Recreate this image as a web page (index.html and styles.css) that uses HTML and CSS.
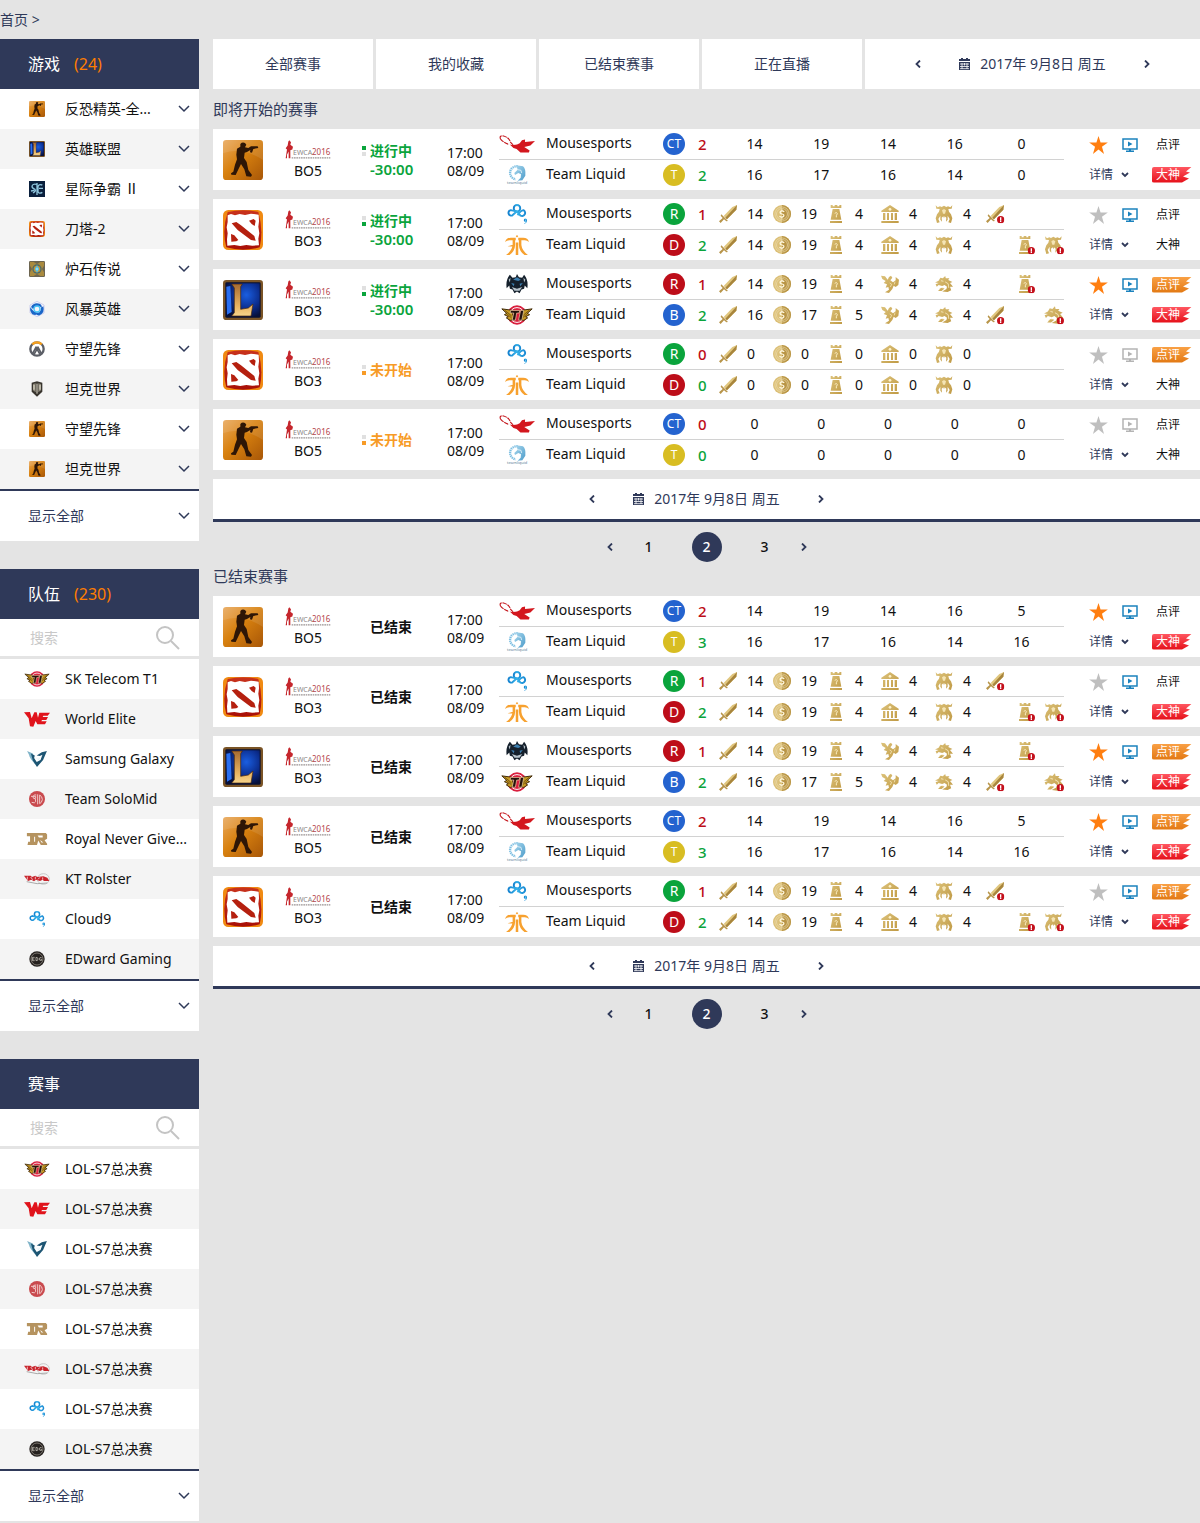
FILE: index.html
```html
<!DOCTYPE html>
<html lang="zh-CN">
<head>
<meta charset="utf-8">
<meta name="viewport" content="width=device-width, initial-scale=1">
<title>赛事</title>
<link rel="stylesheet" href="styles.css">
</head>
<body>
<svg class="sprite" aria-hidden="true">
  <defs>
    <linearGradient id="g-cs" x1="0" y1="0" x2="1" y2="1"><stop offset="0" stop-color="#e9a85c"/><stop offset=".45" stop-color="#d8810f"/><stop offset="1" stop-color="#a85708"/></linearGradient>
    <linearGradient id="g-dota" x1="0" y1="0" x2="0" y2="1"><stop offset="0" stop-color="#c8321c"/><stop offset="1" stop-color="#a80f08"/></linearGradient>
    <radialGradient id="g-lol" cx=".6" cy=".35" r=".7"><stop offset="0" stop-color="#1a5ee0"/><stop offset=".6" stop-color="#0b2c8c"/><stop offset="1" stop-color="#07103a"/></radialGradient>
    <linearGradient id="g-gold" x1="0" y1="0" x2="1" y2="1"><stop offset="0" stop-color="#dcc27a"/><stop offset="1" stop-color="#c09a45"/></linearGradient>
    <linearGradient id="g-bronze" x1="0" y1="0" x2="0" y2="1"><stop offset="0" stop-color="#a66a30"/><stop offset=".7" stop-color="#e9b461"/><stop offset="1" stop-color="#f6d48c"/></linearGradient>
    <linearGradient id="g-c9" x1="0" y1="0" x2="1" y2="0"><stop offset="0" stop-color="#1583d0"/><stop offset=".5" stop-color="#35b3ea"/><stop offset="1" stop-color="#1b8bd4"/></linearGradient>
    <linearGradient id="g-liquid" x1="0" y1="0" x2="1" y2="1"><stop offset="0" stop-color="#a9d8ee"/><stop offset="1" stop-color="#4d9cca"/></linearGradient>
  </defs>
  <symbol id="cs" viewBox="0 0 120 120"><rect width="120" height="120" rx="10" fill="url(#g-cs)"/><path d="M0 40Q60 20 120 60V10Q120 0 110 0H10Q0 0 0 10Z" fill="#fff" opacity=".1"/><path d="M52 12Q58 5 66 9L70 14L66 22L76 24L84 19L104 19L106 24L91 27L87 38L81 37L82 30L72 36L65 38L63 54L71 66L76 90L87 105L84 110L70 109L64 88L54 72L47 86L38 105L25 104L24 100L31 95L36 74L42 58L40 44L42 26L52 20Z" fill="#2e1606"/></symbol>
  <symbol id="dota" viewBox="0 0 120 120"><rect width="120" height="120" rx="16" fill="#f08a12"/><path d="M14 6Q60 -4 106 6Q122 60 110 112Q60 126 10 112Q-4 60 14 6Z" fill="url(#g-dota)"/><path d="M14 16L24 12L36 16L50 12L66 15L84 11L107 14L108 34L106 50L109 70L106 86L108 106L88 107L70 105L52 108L34 105L13 107L12 88L14 70L11 52L14 36Z" fill="#fff"/><path d="M26 40L40 36L54 46L94 78L98 92L84 90L44 60ZM78 32L92 27L98 32L95 48L86 42ZM24 72L34 76L46 90L40 94L25 95Z" fill="#b5200f"/></symbol>
  <symbol id="lol" viewBox="0 0 120 120"><rect width="120" height="120" rx="10" fill="#7a5426"/><rect x="7" y="7" width="106" height="106" rx="4" fill="#0a1030"/><rect x="10" y="10" width="100" height="100" fill="url(#g-lol)"/><path d="M10 20L22 18L26 96L12 104Z" fill="#2a6ff0"/><path d="M26 12H58L53 20V88L76 84L90 72L84 108H26L34 98V24Z" fill="url(#g-bronze)" stroke="#4a2508" stroke-width="2"/></symbol>
  <symbol id="sc" viewBox="0 0 48 48"><rect width="48" height="48" fill="#0a1f3c"/><path d="M22 10Q10 8 9 16Q9 22 18 25Q22 30 12 36M40 12Q28 8 27 18V32Q30 40 40 34M24 6V42M30 22H42M6 30L16 28" fill="none" stroke="#8ec4dc" stroke-width="4"/></symbol>
  <symbol id="hs" viewBox="0 0 48 48"><rect width="48" height="48" rx="4" fill="#6d6550"/><path d="M3 3H14L24 9L34 3H45V14L39 24L45 34V45H34L24 39L14 45H3V34L9 24L3 14Z" fill="#a98a3e"/><circle cx="24" cy="24" r="14" fill="#4d6a6a"/><circle cx="24" cy="24" r="10" fill="#c3953a"/><path d="M24 12L29 24L24 36L19 24Z" fill="#52c6ec"/><circle cx="24" cy="24" r="6" fill="#52c6ec"/><circle cx="24" cy="24" r="2" fill="#fff"/></symbol>
  <symbol id="hots" viewBox="0 0 48 48"><path d="M24 1L45 12V36L24 47L3 36V12Z" fill="#f3f4fc" stroke="#b8bce8" stroke-width="2"/><path d="M6 18Q14 3 32 8Q40 12 38 20Q24 8 12 24ZM43 16Q48 36 32 43Q24 44 20 38Q36 36 36 20ZM10 40Q0 28 5 19Q12 36 30 34Q24 46 10 40Z" fill="#1a66c8"/><circle cx="24" cy="24" r="9" fill="none" stroke="#4bc4f4" stroke-width="4"/></symbol>
  <symbol id="ow" viewBox="0 0 48 48"><circle cx="24" cy="24" r="20" fill="none" stroke="#5b5e66" stroke-width="7"/><path d="M10 10A20 20 0 0 1 38 10" fill="none" stroke="#f6a01e" stroke-width="7"/><path d="M11 37L22 17V28L15 40M37 37L26 17V28L33 40" fill="none" stroke="#5b5e66" stroke-width="5"/></symbol>
  <symbol id="wot" viewBox="0 0 48 48"><path d="M8 5L24 1L40 5V32L24 47L8 32Z" fill="#38342e"/><path d="M12 9L20 7V34L12 28ZM36 9L28 7V34L36 28Z" fill="#8f8a7c"/><path d="M24 8V38M15 12V26M33 12V26" stroke="#e4dfcf" stroke-width="3"/></symbol>
  <symbol id="skt" viewBox="0 0 94 62"><circle cx="47" cy="31" r="30" fill="#d91f3e"/><circle cx="47" cy="31" r="23" fill="none" stroke="#fff" stroke-width="3"/><path d="M0 12L30 16L38 44L26 48L14 40L20 36L8 30L15 26ZM94 12L64 16L56 44L68 48L80 40L74 36L86 30L79 26Z" fill="#c99a22" stroke="#3b2608" stroke-width="3"/><path d="M9 16L30 34M13 25L30 40M85 16L64 34M81 25L64 40" stroke="#4b360e" stroke-width="2"/><path d="M27 17H56L53 25H46L42 47H32L37 25H26ZM58 17H68L62 47H52Z" fill="#24110c" stroke="#f4dfae" stroke-width="2"/></symbol>
  <symbol id="we" viewBox="0 0 78 48"><path d="M0 4L18 3L23 22L31 4L38 4L42 20L46 5H78L71 14H58L56 18H72L67 27H54L52 31H68L63 40H40L35 30L28 47L18 46L14 22Z" fill="#e0131b"/></symbol>
  <symbol id="sg" viewBox="0 0 62 50"><path d="M0 0L18 8L22 24L30 36L26 42Q8 24 6 12Z" fill="#7fb3c8"/><path d="M62 0L46 4L30 14L40 16L48 12L42 28L30 34L22 22L24 14L12 8L18 30L31 50L50 28Z" fill="#1d5573"/><path d="M26 20L34 24L42 20L36 30Z" fill="#e9f4f8"/></symbol>
  <symbol id="tsm" viewBox="0 0 48 48"><circle cx="24" cy="24" r="24" fill="#c94a4e"/><path d="M6 16H20V22H14M22 12Q12 10 12 20Q22 22 20 32Q18 38 8 34M26 40V10M32 38V12Q40 16 40 26Q38 36 32 38" fill="none" stroke="#f2c9c8" stroke-width="3"/></symbol>
  <symbol id="rng" viewBox="0 0 64 38"><path d="M0 0H60L64 5V18L56 23L64 34V38H44L36 24L32 38H2L4 28H10V10H0Z" fill="#b5935f"/><path d="M34 8H50V14H38ZM23 12V28H26V12ZM42 22L52 30H46Z" fill="#fff"/></symbol>
  <symbol id="kt" viewBox="0 0 78 36"><ellipse cx="58" cy="18" rx="18" ry="16" fill="none" stroke="#c9c9c9" stroke-width="3"/><path d="M8 26Q40 36 70 30" fill="none" stroke="#aaa" stroke-width="3"/><path d="M0 8H20L24 12L34 8L40 12L58 10L70 14L76 24H60L56 20L48 24L36 20L30 25L22 20L12 24Z" fill="#c8242c"/><path d="M10 11V20M20 12L26 20M34 11V19M42 19L48 13M56 13V20" stroke="#fff" stroke-width="2"/></symbol>
  <symbol id="c9" viewBox="0 0 64 62"><g fill="none" stroke="url(#g-c9)" stroke-width="6"><circle cx="32" cy="13" r="10"/><path d="M26 22L13 19A8.500 8.500 0 1 0 18 35L31 23L43 36A8.500 8.500 0 1 0 52 19Q43 20 34 35"/><circle cx="58" cy="50" r="3" stroke-width="4"/><path d="M61 51Q61 58 56 61" stroke-width="3"/></g></symbol>
  <symbol id="edg" viewBox="0 0 48 48"><circle cx="24" cy="24" r="23" fill="#25211f"/><circle cx="24" cy="24" r="18" fill="none" stroke="#a59e96" stroke-width="2"/><path d="M10 19H17M10 24H16M10 29H17M10 19V29M21 19V29Q28 29 27 24Q27 19 21 19M38 20Q31 18 31 24Q31 30 38 28V25H35" fill="none" stroke="#d9d4cc" stroke-width="2"/></symbol>
  <symbol id="mouz" viewBox="0 0 94 46"><path d="M4 10Q0 0 12 2Q26 6 30 18Q36 26 46 30M4 10Q12 20 26 24" fill="none" stroke="#c4161c" stroke-width="3" stroke-dasharray="11 2"/><path d="M28 24Q44 28 54 21L60 13L68 11L68 18L94 15L82 27L66 31L80 40L78 45H56L46 36Q36 34 28 24Z" fill="#d3171e"/></symbol>
  <symbol id="liquid" viewBox="0 0 60 60"><path d="M32 4A19 19 0 1 0 26 43" fill="none" stroke="#7dbfe2" stroke-width="7" stroke-dasharray="4 2"/><path d="M28 1L48 4Q57 12 55 32L46 46L32 47L41 38L42 28L34 24L24 30L22 24L32 14Z" fill="url(#g-liquid)"/><path d="M32 14L42 16L44 24" fill="none" stroke="#fff" stroke-width="2"/></symbol>
  <symbol id="fnatic" viewBox="0 0 76 64"><path d="M0 22Q3 9 18 9H34V17H16Q6 16 0 22ZM76 22Q73 9 58 9H42V17H60Q70 16 76 22ZM24 17H32V32Q31 52 14 64H3Q22 50 24 32ZM52 17H44V32Q45 52 62 64H73Q54 50 52 32ZM34 24H42V64H34ZM38 0L42 4L38 8L34 4ZM8 36L24 31V37L16 37Z" fill="#f7a12f"/></symbol>
  <symbol id="dragonteam" viewBox="0 0 68 62"><path d="M12 2L20 12L30 10L34 0L40 10L50 12L56 2Q70 18 66 44L58 36L56 46L48 48L42 60L34 54L26 60L20 48L12 46L10 36L2 44Q-2 18 12 2Z" fill="#15202c"/><path d="M22 18L34 10L46 18L38 22ZM16 28L26 30L24 38ZM52 28L42 30L44 38Z" fill="#3c7fb0"/><path d="M18 40L34 46L50 40L42 52H26ZM8 18L14 12L12 26ZM60 18L54 12L56 26Z" fill="#b7c3cb"/></symbol>
  <symbol id="event" viewBox="0 0 138 56"><path d="M10 4L13 0L18 6L16 14L24 20L22 28L16 30V54H11V34L6 44V54H2L6 28L2 24L8 16Z" fill="#c5262c"/><path d="M20 53H136" stroke="#9b9494" stroke-width="4" stroke-dasharray="5 2"/></symbol>
  <symbol id="sword" viewBox="0 0 54 54"><path d="M54 0L52 14L24 43L14 33L40 6Z" fill="#e0c67e"/><path d="M54 0L52 14L24 43L19 38Z" fill="#a8853d"/><path d="M7 28L27 48L22 49L15 43L5 54L0 49L11 39L5 32Z" fill="#b8954a"/></symbol>
  <symbol id="coin" viewBox="0 0 56 56"><circle cx="28" cy="28" r="28" fill="#dcc078"/><path d="M28 0A28 28 0 0 1 28 56Z" fill="#b99546"/><circle cx="28" cy="28" r="22" fill="none" stroke="#f0dfaf" stroke-width="2"/><circle cx="28" cy="28" r="17" fill="none" stroke="#efe0b4" stroke-width="2"/><path d="M35 21Q28 16 23 20Q20 26 28 28Q36 30 33 35Q28 40 20 35M28 14V18M28 38V42" fill="none" stroke="#fff8e0" stroke-width="4"/></symbol>
  <symbol id="tower" viewBox="0 0 54 54"><path d="M11 0H17V4H23V0H31V4H37V0H43V9H11ZM17 12H37L43 44H11ZM9 48H45V54H9Z" fill="url(#g-gold)"/><path d="M24 26Q27 18 31 26L28 32V37" fill="none" stroke="#fff2c8" stroke-width="3"/></symbol>
  <symbol id="temple" viewBox="0 0 54 54"><path d="M27 0L53 17V21H1V17ZM6 24H13V45H6ZM18 24H24V45H18ZM30 24H36V45H30ZM41 24H48V45H41ZM1 48H53V54H1Z" fill="url(#g-gold)"/><circle cx="27" cy="13" r="4" fill="#fff2c8"/></symbol>
  <symbol id="beast" viewBox="0 0 54 54"><path d="M2 1L8 7L15 4L20 6L27 2L34 6L39 4L46 7L52 1L50 11L40 12L42 20L48 28L52 40L48 54L40 52L44 42L38 32L38 44L33 50L34 38L29 34L27 40L25 34L20 38L21 50L16 44L16 32L10 42L14 52L6 54L2 40L6 28L12 20L14 12L4 11Z" fill="url(#g-gold)"/><path d="M21 16L27 12L33 16L30 26H24Z" fill="#f4e4b4"/></symbol>
  <symbol id="drake" viewBox="0 0 54 54"><path d="M0 2L12 4L20 14L24 6L30 2L34 8L28 16L36 22L44 16L44 6L54 14L52 30L44 36L38 32L34 42L24 54L12 52L24 44L22 36L14 38L18 28L8 24L14 18L4 12Z" fill="url(#g-gold)"/><path d="M26 24L32 28L28 36M42 20L40 28" fill="none" stroke="#fff2c8" stroke-width="2"/></symbol>
  <symbol id="baron" viewBox="0 0 60 54"><path d="M0 22L12 16L18 6L26 8L34 0L36 8L48 8L44 14L58 20L50 24L60 36L50 36L54 48L42 54L24 52L38 44L40 36L32 30L24 34L12 30L6 36L2 28L12 24Z" fill="url(#g-gold)"/><path d="M20 16L28 18M34 20L44 26L46 40M14 44L24 40L30 42" fill="none" stroke="#f6e6b8" stroke-width="3"/><path d="M10 50L20 40L32 42L22 50Z" fill="#cfae5e"/></symbol>
  <symbol id="alert" viewBox="0 0 22 22"><circle cx="11" cy="11" r="11" fill="#c4101c"/><path d="M11 4V14M11 15V18" stroke="#fff" stroke-width="4"/></symbol>
  <symbol id="sword-alert" viewBox="0 0 60 60"><use href="#sword" x="0" y="3" width="54" height="54"/><use href="#alert" x="33" y="36" width="22" height="22"/></symbol>
  <symbol id="tower-alert" viewBox="0 0 60 60"><use href="#tower" x="3" y="3" width="54" height="54"/><use href="#alert" x="38" y="36" width="22" height="22"/></symbol>
  <symbol id="beast-alert" viewBox="0 0 60 60"><use href="#beast" x="1" y="3" width="54" height="54"/><use href="#alert" x="38" y="36" width="22" height="22"/></symbol>
  <symbol id="baron-alert" viewBox="0 0 60 60"><use href="#baron" x="0" y="3" width="58" height="54"/><use href="#alert" x="38" y="36" width="22" height="22"/></symbol>
  <symbol id="star" viewBox="0 0 54 52"><path d="M27 0L33 19H54L37 31L43 52L27 39L11 52L17 31L0 19H21Z" fill="currentColor"/></symbol>
  <symbol id="tv" viewBox="0 0 16 14"><path d="M1 1H15V11H1Z" fill="none" stroke="currentColor" stroke-width="1.500"/><path d="M6 3.500L10.500 6L6 8.500ZM4 12.500H12V14H4ZM7 11H9V13H7Z" fill="currentColor"/></symbol>
  <symbol id="down" viewBox="0 0 12 8"><path d="M1 1L6 6L11 1" fill="none" stroke="currentColor" stroke-width="1.500"/></symbol>
  <symbol id="down-s" viewBox="0 0 8 6"><path d="M1 1L4 4L7 1" fill="none" stroke="currentColor" stroke-width="1.800"/></symbol>
  <symbol id="left" viewBox="0 0 6 8"><path d="M5 .5L1.500 4L5 7.500" fill="none" stroke="currentColor" stroke-width="1.800"/></symbol>
  <symbol id="right" viewBox="0 0 6 8"><path d="M1 .5L4.500 4L1 7.500" fill="none" stroke="currentColor" stroke-width="1.800"/></symbol>
  <symbol id="cal" viewBox="0 0 11 12"><path d="M0 1H2V0H4V1H7V0H9V1H11V3H0ZM0 4H11V12H0Z" fill="currentColor"/><path d="M1 6H10M1 8.500H10M1 10.700H10M3 5V11M5.500 5V7.500M8 5V11" stroke="#fff" stroke-width=".8"/></symbol>
  <symbol id="search" viewBox="0 0 24 24"><circle cx="9" cy="9" r="8" fill="none" stroke="currentColor" stroke-width="2"/><path d="M15 15L23 23" stroke="currentColor" stroke-width="2"/></symbol>
</svg>

<nav class="crumbs" aria-label="位置"><a href="#">首页</a> &gt;</nav>
<div class="page">
  <aside class="side">
    <section class="panel">
      <h2 class="panel-head">游戏<span class="count">(24)</span></h2>
      <ul class="list">
        <li><button class="item"><svg class="logo"><use href="#cs"/></svg><span class="label">反恐精英-全...</span><svg class="down"><use href="#down"/></svg></button></li>
        <li><button class="item"><svg class="logo"><use href="#lol"/></svg><span class="label">英雄联盟</span><svg class="down"><use href="#down"/></svg></button></li>
        <li><button class="item"><svg class="logo"><use href="#sc"/></svg><span class="label">星际争霸 Ⅱ</span><svg class="down"><use href="#down"/></svg></button></li>
        <li><button class="item"><svg class="logo"><use href="#dota"/></svg><span class="label">刀塔-2</span><svg class="down"><use href="#down"/></svg></button></li>
        <li><button class="item"><svg class="logo"><use href="#hs"/></svg><span class="label">炉石传说</span><svg class="down"><use href="#down"/></svg></button></li>
        <li><button class="item"><svg class="logo"><use href="#hots"/></svg><span class="label">风暴英雄</span><svg class="down"><use href="#down"/></svg></button></li>
        <li><button class="item"><svg class="logo"><use href="#ow"/></svg><span class="label">守望先锋</span><svg class="down"><use href="#down"/></svg></button></li>
        <li><button class="item"><svg class="logo"><use href="#wot"/></svg><span class="label">坦克世界</span><svg class="down"><use href="#down"/></svg></button></li>
        <li><button class="item"><svg class="logo"><use href="#cs"/></svg><span class="label">守望先锋</span><svg class="down"><use href="#down"/></svg></button></li>
        <li><button class="item"><svg class="logo"><use href="#cs"/></svg><span class="label">坦克世界</span><svg class="down"><use href="#down"/></svg></button></li>
      </ul>
      <button class="more">显示全部<svg class="down"><use href="#down"/></svg></button>
    </section>

    <section class="panel">
      <h2 class="panel-head">队伍<span class="count">(230)</span></h2>
      <label class="search"><input type="search" placeholder="搜索" aria-label="搜索队伍"><svg class="lens"><use href="#search"/></svg></label>
      <ul class="list">
        <li><a class="item" href="#"><svg class="logo"><use href="#skt"/></svg><span class="label">SK Telecom T1</span></a></li>
        <li><a class="item" href="#"><svg class="logo"><use href="#we"/></svg><span class="label">World Elite</span></a></li>
        <li><a class="item" href="#"><svg class="logo"><use href="#sg"/></svg><span class="label">Samsung Galaxy</span></a></li>
        <li><a class="item" href="#"><svg class="logo"><use href="#tsm"/></svg><span class="label">Team SoloMid</span></a></li>
        <li><a class="item" href="#"><svg class="logo short"><use href="#rng"/></svg><span class="label">Royal Never Give...</span></a></li>
        <li><a class="item" href="#"><svg class="logo short"><use href="#kt"/></svg><span class="label">KT Rolster</span></a></li>
        <li><a class="item" href="#"><svg class="logo"><use href="#c9"/></svg><span class="label">Cloud9</span></a></li>
        <li><a class="item" href="#"><svg class="logo"><use href="#edg"/></svg><span class="label">EDward Gaming</span></a></li>
      </ul>
      <button class="more">显示全部<svg class="down"><use href="#down"/></svg></button>
    </section>

    <section class="panel">
      <h2 class="panel-head">赛事</h2>
      <label class="search"><input type="search" placeholder="搜索" aria-label="搜索赛事"><svg class="lens"><use href="#search"/></svg></label>
      <ul class="list">
        <li><a class="item" href="#"><svg class="logo"><use href="#skt"/></svg><span class="label">LOL-S7总决赛</span></a></li>
        <li><a class="item" href="#"><svg class="logo"><use href="#we"/></svg><span class="label">LOL-S7总决赛</span></a></li>
        <li><a class="item" href="#"><svg class="logo"><use href="#sg"/></svg><span class="label">LOL-S7总决赛</span></a></li>
        <li><a class="item" href="#"><svg class="logo"><use href="#tsm"/></svg><span class="label">LOL-S7总决赛</span></a></li>
        <li><a class="item" href="#"><svg class="logo short"><use href="#rng"/></svg><span class="label">LOL-S7总决赛</span></a></li>
        <li><a class="item" href="#"><svg class="logo short"><use href="#kt"/></svg><span class="label">LOL-S7总决赛</span></a></li>
        <li><a class="item" href="#"><svg class="logo"><use href="#c9"/></svg><span class="label">LOL-S7总决赛</span></a></li>
        <li><a class="item" href="#"><svg class="logo"><use href="#edg"/></svg><span class="label">LOL-S7总决赛</span></a></li>
      </ul>
      <button class="more">显示全部<svg class="down"><use href="#down"/></svg></button>
    </section>
  </aside>

  <main class="main">
    <div class="tabs">
      <a class="tab" href="#">全部赛事</a><a class="tab" href="#">我的收藏</a><a class="tab" href="#">已结束赛事</a><a class="tab" href="#">正在直播</a>
      <div class="date"><button aria-label="前一天"><svg class="arrow"><use href="#left"/></svg></button><span class="day"><svg class="cal"><use href="#cal"/></svg>2017年 9月8日 周五</span><button aria-label="后一天"><svg class="arrow"><use href="#right"/></svg></button></div>
    </div>

    <h2 class="title">即将开始的赛事</h2>
    <div class="matches">
      <article class="match">
        <svg class="game"><use href="#cs"/></svg>
        <div class="event"><svg class="event-logo" viewBox="0 0 46 19"><use href="#event"/><text class="mark" x="8" y="15">EWCA</text><text class="year" x="27" y="15">2016</text></svg><span>BO5</span></div>
        <div class="status live"><i class="blink up"></i><span>进行中</span><span class="clock">-30:00</span></div>
        <div class="time"><span>17:00</span><span>08/09</span></div>
        <div class="teams">
          <div class="team"><svg class="crest"><use href="#mouz"/></svg><span class="name">Mousesports</span><span class="badge blue ct">CT</span><b class="score lose">2</b><div class="rounds"><span>14</span><span>19</span><span>14</span><span>16</span><span>0</span></div></div>
          <div class="team"><svg class="crest" viewBox="0 0 36 20"><use href="#liquid"/><text class="tiny" x="8" y="19">teamliquid</text></svg><span class="name">Team Liquid</span><span class="badge yellow ct">T</span><b class="score win">2</b><div class="rounds"><span>16</span><span>17</span><span>16</span><span>14</span><span>0</span></div></div>
        </div>
        <div class="actions"><button class="star on" aria-label="收藏"><svg><use href="#star"/></svg></button><a class="tv" href="#" aria-label="直播"><svg><use href="#tv"/></svg></a><a class="tag" href="#">点评</a><button class="detail">详情<svg><use href="#down-s"/></svg></button><a class="tag red" href="#">大神</a></div>
      </article>

      <article class="match">
        <svg class="game"><use href="#dota"/></svg>
        <div class="event"><svg class="event-logo" viewBox="0 0 46 19"><use href="#event"/><text class="mark" x="8" y="15">EWCA</text><text class="year" x="27" y="15">2016</text></svg><span>BO3</span></div>
        <div class="status live"><i class="blink"></i><span>进行中</span><span class="clock">-30:00</span></div>
        <div class="time"><span>17:00</span><span>08/09</span></div>
        <div class="teams">
          <div class="team"><svg class="crest"><use href="#c9"/></svg><span class="name">Mousesports</span><span class="badge green">R</span><b class="score lose">1</b><div class="stats"><span><svg><use href="#sword"/></svg>14</span><span><svg><use href="#coin"/></svg>19</span><span><svg><use href="#tower"/></svg>4</span><span><svg><use href="#temple"/></svg>4</span><span><svg><use href="#beast"/></svg>4</span><div class="firsts"><svg><use href="#sword-alert"/></svg></div></div></div>
          <div class="team"><svg class="crest"><use href="#fnatic"/></svg><span class="name">Team Liquid</span><span class="badge red">D</span><b class="score win">2</b><div class="stats"><span><svg><use href="#sword"/></svg>14</span><span><svg><use href="#coin"/></svg>19</span><span><svg><use href="#tower"/></svg>4</span><span><svg><use href="#temple"/></svg>4</span><span><svg><use href="#beast"/></svg>4</span><div class="firsts"><svg></svg><svg><use href="#tower-alert"/></svg><svg><use href="#beast-alert"/></svg></div></div></div>
        </div>
        <div class="actions"><button class="star" aria-label="收藏"><svg><use href="#star"/></svg></button><a class="tv" href="#" aria-label="直播"><svg><use href="#tv"/></svg></a><a class="tag" href="#">点评</a><button class="detail">详情<svg><use href="#down-s"/></svg></button><a class="tag" href="#">大神</a></div>
      </article>

      <article class="match">
        <svg class="game"><use href="#lol"/></svg>
        <div class="event"><svg class="event-logo" viewBox="0 0 46 19"><use href="#event"/><text class="mark" x="8" y="15">EWCA</text><text class="year" x="27" y="15">2016</text></svg><span>BO3</span></div>
        <div class="status live"><i class="blink"></i><span>进行中</span><span class="clock">-30:00</span></div>
        <div class="time"><span>17:00</span><span>08/09</span></div>
        <div class="teams">
          <div class="team"><svg class="crest"><use href="#dragonteam"/></svg><span class="name">Mousesports</span><span class="badge red">R</span><b class="score lose">1</b><div class="stats"><span><svg><use href="#sword"/></svg>14</span><span><svg><use href="#coin"/></svg>19</span><span><svg><use href="#tower"/></svg>4</span><span><svg><use href="#drake"/></svg>4</span><span><svg><use href="#baron"/></svg>4</span><div class="firsts"><svg></svg><svg><use href="#tower-alert"/></svg><svg></svg></div></div></div>
          <div class="team"><svg class="crest"><use href="#skt"/></svg><span class="name">Team Liquid</span><span class="badge blue">B</span><b class="score win">2</b><div class="stats"><span><svg><use href="#sword"/></svg>16</span><span><svg><use href="#coin"/></svg>17</span><span><svg><use href="#tower"/></svg>5</span><span><svg><use href="#drake"/></svg>4</span><span><svg><use href="#baron"/></svg>4</span><div class="firsts"><svg><use href="#sword-alert"/></svg><svg><use href="#baron-alert"/></svg></div></div></div>
        </div>
        <div class="actions"><button class="star on" aria-label="收藏"><svg><use href="#star"/></svg></button><a class="tv" href="#" aria-label="直播"><svg><use href="#tv"/></svg></a><a class="tag orange" href="#">点评</a><button class="detail">详情<svg><use href="#down-s"/></svg></button><a class="tag red" href="#">大神</a></div>
      </article>

      <article class="match">
        <svg class="game"><use href="#dota"/></svg>
        <div class="event"><svg class="event-logo" viewBox="0 0 46 19"><use href="#event"/><text class="mark" x="8" y="15">EWCA</text><text class="year" x="27" y="15">2016</text></svg><span>BO3</span></div>
        <div class="status soon"><i class="blink"></i><span>未开始</span></div>
        <div class="time"><span>17:00</span><span>08/09</span></div>
        <div class="teams">
          <div class="team"><svg class="crest"><use href="#c9"/></svg><span class="name">Mousesports</span><span class="badge green">R</span><b class="score lose">0</b><div class="stats"><span><svg><use href="#sword"/></svg>0</span><span><svg><use href="#coin"/></svg>0</span><span><svg><use href="#tower"/></svg>0</span><span><svg><use href="#temple"/></svg>0</span><span><svg><use href="#beast"/></svg>0</span></div></div>
          <div class="team"><svg class="crest"><use href="#fnatic"/></svg><span class="name">Team Liquid</span><span class="badge red">D</span><b class="score win">0</b><div class="stats"><span><svg><use href="#sword"/></svg>0</span><span><svg><use href="#coin"/></svg>0</span><span><svg><use href="#tower"/></svg>0</span><span><svg><use href="#temple"/></svg>0</span><span><svg><use href="#beast"/></svg>0</span></div></div>
        </div>
        <div class="actions"><button class="star" aria-label="收藏"><svg><use href="#star"/></svg></button><a class="tv off" href="#" aria-label="直播"><svg><use href="#tv"/></svg></a><a class="tag orange" href="#">点评</a><button class="detail">详情<svg><use href="#down-s"/></svg></button><a class="tag" href="#">大神</a></div>
      </article>

      <article class="match">
        <svg class="game"><use href="#cs"/></svg>
        <div class="event"><svg class="event-logo" viewBox="0 0 46 19"><use href="#event"/><text class="mark" x="8" y="15">EWCA</text><text class="year" x="27" y="15">2016</text></svg><span>BO5</span></div>
        <div class="status soon"><i class="blink"></i><span>未开始</span></div>
        <div class="time"><span>17:00</span><span>08/09</span></div>
        <div class="teams">
          <div class="team"><svg class="crest"><use href="#mouz"/></svg><span class="name">Mousesports</span><span class="badge blue ct">CT</span><b class="score lose">0</b><div class="rounds"><span>0</span><span>0</span><span>0</span><span>0</span><span>0</span></div></div>
          <div class="team"><svg class="crest" viewBox="0 0 36 20"><use href="#liquid"/><text class="tiny" x="8" y="19">teamliquid</text></svg><span class="name">Team Liquid</span><span class="badge yellow ct">T</span><b class="score win">0</b><div class="rounds"><span>0</span><span>0</span><span>0</span><span>0</span><span>0</span></div></div>
        </div>
        <div class="actions"><button class="star" aria-label="收藏"><svg><use href="#star"/></svg></button><a class="tv off" href="#" aria-label="直播"><svg><use href="#tv"/></svg></a><a class="tag" href="#">点评</a><button class="detail">详情<svg><use href="#down-s"/></svg></button><a class="tag" href="#">大神</a></div>
      </article>
      <div class="date wide"><button aria-label="前一天"><svg class="arrow"><use href="#left"/></svg></button><span class="day"><svg class="cal"><use href="#cal"/></svg>2017年 9月8日 周五</span><button aria-label="后一天"><svg class="arrow"><use href="#right"/></svg></button></div>
    </div>
    <nav class="pager" aria-label="分页"><button aria-label="上一页"><svg class="arrow"><use href="#left"/></svg></button><ol><li><a href="#">1</a></li><li><a class="current" href="#" aria-current="page">2</a></li><li><a href="#">3</a></li></ol><button aria-label="下一页"><svg class="arrow"><use href="#right"/></svg></button></nav>

    <h2 class="title">已结束赛事</h2>
    <div class="matches">
      <article class="match">
        <svg class="game"><use href="#cs"/></svg>
        <div class="event"><svg class="event-logo" viewBox="0 0 46 19"><use href="#event"/><text class="mark" x="8" y="15">EWCA</text><text class="year" x="27" y="15">2016</text></svg><span>BO5</span></div>
        <div class="status"><i></i><span>已结束</span></div>
        <div class="time"><span>17:00</span><span>08/09</span></div>
        <div class="teams">
          <div class="team"><svg class="crest"><use href="#mouz"/></svg><span class="name">Mousesports</span><span class="badge blue ct">CT</span><b class="score lose">2</b><div class="rounds"><span>14</span><span>19</span><span>14</span><span>16</span><span>5</span></div></div>
          <div class="team"><svg class="crest" viewBox="0 0 36 20"><use href="#liquid"/><text class="tiny" x="8" y="19">teamliquid</text></svg><span class="name">Team Liquid</span><span class="badge yellow ct">T</span><b class="score win">3</b><div class="rounds"><span>16</span><span>17</span><span>16</span><span>14</span><span>16</span></div></div>
        </div>
        <div class="actions"><button class="star on" aria-label="收藏"><svg><use href="#star"/></svg></button><a class="tv" href="#" aria-label="直播"><svg><use href="#tv"/></svg></a><a class="tag" href="#">点评</a><button class="detail">详情<svg><use href="#down-s"/></svg></button><a class="tag red" href="#">大神</a></div>
      </article>

      <article class="match">
        <svg class="game"><use href="#dota"/></svg>
        <div class="event"><svg class="event-logo" viewBox="0 0 46 19"><use href="#event"/><text class="mark" x="8" y="15">EWCA</text><text class="year" x="27" y="15">2016</text></svg><span>BO3</span></div>
        <div class="status"><i></i><span>已结束</span></div>
        <div class="time"><span>17:00</span><span>08/09</span></div>
        <div class="teams">
          <div class="team"><svg class="crest"><use href="#c9"/></svg><span class="name">Mousesports</span><span class="badge green">R</span><b class="score lose">1</b><div class="stats"><span><svg><use href="#sword"/></svg>14</span><span><svg><use href="#coin"/></svg>19</span><span><svg><use href="#tower"/></svg>4</span><span><svg><use href="#temple"/></svg>4</span><span><svg><use href="#beast"/></svg>4</span><div class="firsts"><svg><use href="#sword-alert"/></svg></div></div></div>
          <div class="team"><svg class="crest"><use href="#fnatic"/></svg><span class="name">Team Liquid</span><span class="badge red">D</span><b class="score win">2</b><div class="stats"><span><svg><use href="#sword"/></svg>14</span><span><svg><use href="#coin"/></svg>19</span><span><svg><use href="#tower"/></svg>4</span><span><svg><use href="#temple"/></svg>4</span><span><svg><use href="#beast"/></svg>4</span><div class="firsts"><svg></svg><svg><use href="#tower-alert"/></svg><svg><use href="#beast-alert"/></svg></div></div></div>
        </div>
        <div class="actions"><button class="star" aria-label="收藏"><svg><use href="#star"/></svg></button><a class="tv" href="#" aria-label="直播"><svg><use href="#tv"/></svg></a><a class="tag" href="#">点评</a><button class="detail">详情<svg><use href="#down-s"/></svg></button><a class="tag red" href="#">大神</a></div>
      </article>

      <article class="match">
        <svg class="game"><use href="#lol"/></svg>
        <div class="event"><svg class="event-logo" viewBox="0 0 46 19"><use href="#event"/><text class="mark" x="8" y="15">EWCA</text><text class="year" x="27" y="15">2016</text></svg><span>BO3</span></div>
        <div class="status"><i></i><span>已结束</span></div>
        <div class="time"><span>17:00</span><span>08/09</span></div>
        <div class="teams">
          <div class="team"><svg class="crest"><use href="#dragonteam"/></svg><span class="name">Mousesports</span><span class="badge red">R</span><b class="score lose">1</b><div class="stats"><span><svg><use href="#sword"/></svg>14</span><span><svg><use href="#coin"/></svg>19</span><span><svg><use href="#tower"/></svg>4</span><span><svg><use href="#drake"/></svg>4</span><span><svg><use href="#baron"/></svg>4</span><div class="firsts"><svg></svg><svg><use href="#tower-alert"/></svg><svg></svg></div></div></div>
          <div class="team"><svg class="crest"><use href="#skt"/></svg><span class="name">Team Liquid</span><span class="badge blue">B</span><b class="score win">2</b><div class="stats"><span><svg><use href="#sword"/></svg>16</span><span><svg><use href="#coin"/></svg>17</span><span><svg><use href="#tower"/></svg>5</span><span><svg><use href="#drake"/></svg>4</span><span><svg><use href="#baron"/></svg>4</span><div class="firsts"><svg><use href="#sword-alert"/></svg><svg><use href="#baron-alert"/></svg></div></div></div>
        </div>
        <div class="actions"><button class="star on" aria-label="收藏"><svg><use href="#star"/></svg></button><a class="tv" href="#" aria-label="直播"><svg><use href="#tv"/></svg></a><a class="tag orange" href="#">点评</a><button class="detail">详情<svg><use href="#down-s"/></svg></button><a class="tag red" href="#">大神</a></div>
      </article>

      <article class="match">
        <svg class="game"><use href="#cs"/></svg>
        <div class="event"><svg class="event-logo" viewBox="0 0 46 19"><use href="#event"/><text class="mark" x="8" y="15">EWCA</text><text class="year" x="27" y="15">2016</text></svg><span>BO5</span></div>
        <div class="status"><i></i><span>已结束</span></div>
        <div class="time"><span>17:00</span><span>08/09</span></div>
        <div class="teams">
          <div class="team"><svg class="crest"><use href="#mouz"/></svg><span class="name">Mousesports</span><span class="badge blue ct">CT</span><b class="score lose">2</b><div class="rounds"><span>14</span><span>19</span><span>14</span><span>16</span><span>5</span></div></div>
          <div class="team"><svg class="crest" viewBox="0 0 36 20"><use href="#liquid"/><text class="tiny" x="8" y="19">teamliquid</text></svg><span class="name">Team Liquid</span><span class="badge yellow ct">T</span><b class="score win">3</b><div class="rounds"><span>16</span><span>17</span><span>16</span><span>14</span><span>16</span></div></div>
        </div>
        <div class="actions"><button class="star on" aria-label="收藏"><svg><use href="#star"/></svg></button><a class="tv" href="#" aria-label="直播"><svg><use href="#tv"/></svg></a><a class="tag orange" href="#">点评</a><button class="detail">详情<svg><use href="#down-s"/></svg></button><a class="tag red" href="#">大神</a></div>
      </article>

      <article class="match">
        <svg class="game"><use href="#dota"/></svg>
        <div class="event"><svg class="event-logo" viewBox="0 0 46 19"><use href="#event"/><text class="mark" x="8" y="15">EWCA</text><text class="year" x="27" y="15">2016</text></svg><span>BO3</span></div>
        <div class="status"><i></i><span>已结束</span></div>
        <div class="time"><span>17:00</span><span>08/09</span></div>
        <div class="teams">
          <div class="team"><svg class="crest"><use href="#c9"/></svg><span class="name">Mousesports</span><span class="badge green">R</span><b class="score lose">1</b><div class="stats"><span><svg><use href="#sword"/></svg>14</span><span><svg><use href="#coin"/></svg>19</span><span><svg><use href="#tower"/></svg>4</span><span><svg><use href="#temple"/></svg>4</span><span><svg><use href="#beast"/></svg>4</span><div class="firsts"><svg><use href="#sword-alert"/></svg></div></div></div>
          <div class="team"><svg class="crest"><use href="#fnatic"/></svg><span class="name">Team Liquid</span><span class="badge red">D</span><b class="score win">2</b><div class="stats"><span><svg><use href="#sword"/></svg>14</span><span><svg><use href="#coin"/></svg>19</span><span><svg><use href="#tower"/></svg>4</span><span><svg><use href="#temple"/></svg>4</span><span><svg><use href="#beast"/></svg>4</span><div class="firsts"><svg></svg><svg><use href="#tower-alert"/></svg><svg><use href="#beast-alert"/></svg></div></div></div>
        </div>
        <div class="actions"><button class="star" aria-label="收藏"><svg><use href="#star"/></svg></button><a class="tv" href="#" aria-label="直播"><svg><use href="#tv"/></svg></a><a class="tag orange" href="#">点评</a><button class="detail">详情<svg><use href="#down-s"/></svg></button><a class="tag red" href="#">大神</a></div>
      </article>
      <div class="date wide"><button aria-label="前一天"><svg class="arrow"><use href="#left"/></svg></button><span class="day"><svg class="cal"><use href="#cal"/></svg>2017年 9月8日 周五</span><button aria-label="后一天"><svg class="arrow"><use href="#right"/></svg></button></div>
    </div>
    <nav class="pager" aria-label="分页"><button aria-label="上一页"><svg class="arrow"><use href="#left"/></svg></button><ol><li><a href="#">1</a></li><li><a class="current" href="#" aria-current="page">2</a></li><li><a href="#">3</a></li></ol><button aria-label="下一页"><svg class="arrow"><use href="#right"/></svg></button></nav>
  </main>
</div>
</body>
</html>
```

FILE: styles.css
```css
:root {
  --navy: #2f3959;
  --orange: #ff7e00;
  --line: #d2d2d2;
}

* { box-sizing: border-box; }

body {
  margin: 0;
  background: #e4e4e4;
  color: #111;
  font: 14px/20px "Noto Sans", "Noto Sans CJK SC", sans-serif;
}

.sprite { position: absolute; width: 0; height: 0; }

a { color: inherit; text-decoration: none; }
button { margin: 0; padding: 0; border: 0; background: none; color: inherit; font: inherit; cursor: pointer; }
ul, ol { margin: 0; padding: 0; list-style: none; }
svg { display: block; flex: none; }

.crumbs { height: 39px; padding-top: 10px; color: var(--navy); }

.page { display: flex; gap: 14px; align-items: flex-start; padding-bottom: 2px; }

/* sidebar */
.side { flex: none; width: 199px; display: flex; flex-direction: column; gap: 28px; }
.panel-head {
  margin: 0;
  height: 50px;
  padding-left: 28px;
  display: flex;
  align-items: center;
  gap: 14px;
  background: var(--navy);
  color: #fff;
  font-size: 16px;
  font-weight: 400;
}
.count { color: var(--orange); }

.search {
  display: flex;
  align-items: center;
  height: 37px;
  margin-bottom: 3px;
  padding: 0 19px 0 30px;
  background: #fff;
  color: #c4c4c4;
}
.search input {
  flex: 1;
  min-width: 0;
  padding: 0;
  border: 0;
  outline: 0;
  background: none;
  font: inherit;
  color: #111;
}
.search input::placeholder { color: #c8c8c8; opacity: 1; }
.lens { width: 24px; height: 24px; }

.list li { background: #fff; }
.list li:nth-child(even) { background: #f4f4f4; }
.item {
  display: flex;
  align-items: center;
  gap: 15px;
  width: 100%;
  height: 40px;
  padding: 0 9px 0 24px;
  text-align: left;
  white-space: nowrap;
}
.item .logo { width: 26px; height: 16px; }
.item .logo.short { height: 12px; }
.item .label { flex: 1; min-width: 0; }
.down { width: 12px; height: 8px; color: var(--navy); }

.more {
  display: flex;
  align-items: center;
  justify-content: space-between;
  width: 100%;
  height: 52px;
  padding: 0 9px 0 28px;
  border-top: 2px solid var(--navy);
  background: #fff;
  color: var(--navy);
}

/* tabs and date switch */
.main { flex: 1; min-width: 0; }
.tabs { display: flex; gap: 3px; margin-bottom: 10px; color: var(--navy); }
.tab {
  flex: 160 1 0;
  height: 50px;
  display: flex;
  align-items: center;
  justify-content: center;
  background: #fff;
}
.date {
  display: flex;
  align-items: center;
  justify-content: center;
  gap: 31px;
  background: #fff;
  color: var(--navy);
}
.tabs .date { flex: 335 1 0; }
.date button, .pager button { display: grid; place-items: center; width: 20px; height: 20px; }
.day { display: flex; align-items: center; gap: 10px; white-space: nowrap; }
.arrow { width: 6px; height: 8px; }
.cal { width: 11px; height: 12px; }
.date.wide { height: 43px; border-bottom: 3px solid var(--navy); }

.title { margin: 0 0 10px; font-size: 15px; line-height: 20px; font-weight: 400; color: var(--navy); }

/* match rows */
.matches { display: flex; flex-direction: column; gap: 9px; }
.match {
  display: grid;
  grid-template-columns: 62px 77px 85px 52px minmax(0, 1fr) 136px;
  align-items: center;
  padding-left: 10px;
  background: #fff;
}
.game { width: 40px; height: 40px; }
.event { width: 46px; display: flex; flex-direction: column; align-items: center; gap: 3px; line-height: 18px; }
.event-logo { width: 46px; height: 19px; }
.mark { font-size: 7px; fill: #8c8686; }
.year { font-size: 8px; fill: #b4464c; }
.tiny { font-size: 4px; fill: #5d8298; }
.status {
  display: grid;
  grid-template-columns: 4px auto;
  column-gap: 4px;
  align-items: center;
  line-height: 18px;
  font-weight: 700;
}
.status .clock { grid-column: 2; font-size: 15px; font-weight: 600; }
.live { color: #0aa43c; }
.soon { color: #f79b26; }
.blink { display: flex; flex-direction: column; gap: 2px; }
.blink::before, .blink::after { content: ""; width: 4px; height: 4px; background: #e0e0e0; }
.blink::after, .blink.up::before { background: currentColor; }
.blink.up::after { background: #e0e0e0; }
.time { display: flex; flex-direction: column; padding-top: 5px; line-height: 18px; }

.teams { min-width: 0; }
.team {
  display: grid;
  grid-template-columns: 47px 117px 22px 34px minmax(0, 1fr);
  align-items: center;
  height: 30px;
}
.team + .team { height: 31px; border-top: 1px solid var(--line); }
.crest { width: 36px; height: 20px; }
.name { padding-bottom: 2px; }
.badge {
  display: grid;
  place-items: center;
  width: 22px;
  height: 22px;
  border-radius: 50%;
  color: #fff;
  line-height: 22px;
}
.badge.ct { font-size: 12px; }
.badge.blue { background: #2463cf; }
.badge.yellow { background: #d8bd22; }
.badge.green { background: #0aa43c; }
.badge.red { background: #bd0d19; }
.score { padding-left: 13px; font-size: 15px; font-weight: 500; }
.lose { color: #bd0d19; }
.win { color: #0aa43c; }

.rounds { display: grid; grid-template-columns: repeat(5, 1fr); padding: 0 9px 0 2px; text-align: center; }
.stats { display: grid; grid-template-columns: repeat(5, 54fr) 75fr; align-items: center; }
.stats > span { display: flex; align-items: center; gap: 10px; }
.stats > span > svg { width: 18px; height: 18px; }
.firsts { display: flex; justify-content: space-between; margin-left: -3px; }
.firsts > svg { width: 20px; height: 20px; }

/* row actions */
.actions {
  display: grid;
  grid-template-columns: 33px 30px 40px;
  grid-template-rows: 30px 30px;
  align-items: center;
  padding-left: 25px;
  font-size: 12px;
}
.star { color: #bfbfbf; }
.star.on { color: #ff7e10; }
.star svg { width: 19px; height: 18px; }
.tv { color: #1b82bd; }
.tv.off { color: #b4b4b4; }
.tv svg { width: 16px; height: 14px; }
.detail { grid-column: span 2; display: flex; align-items: center; gap: 8px; color: var(--navy); }
.detail svg { width: 8px; height: 6px; }
.tag { height: 16px; padding-left: 4px; line-height: 16px; }
.tag.orange, .tag.red {
  border-radius: 2px 0 0 2px;
  color: #fff;
  clip-path: polygon(0 0, 100% 0, 34px 5px, 38px 6px, 31px 10px, 37px 12px, 30px 16px, 0 100%);
}
.tag.orange { background: linear-gradient(#f9a045, #e27812); }
.tag.red { background: linear-gradient(#ff5660, #e50f18); }

/* pagination */
.pager { display: flex; align-items: center; justify-content: center; gap: 14px; padding: 10px 0 4px; color: var(--navy); }
.pager ol { display: flex; gap: 28px; }
.pager a {
  display: grid;
  place-items: center;
  width: 30px;
  height: 30px;
  border-radius: 50%;
  color: #111;
  font-weight: 500;
}
.pager .current { background: var(--navy); color: #fff; }
```
